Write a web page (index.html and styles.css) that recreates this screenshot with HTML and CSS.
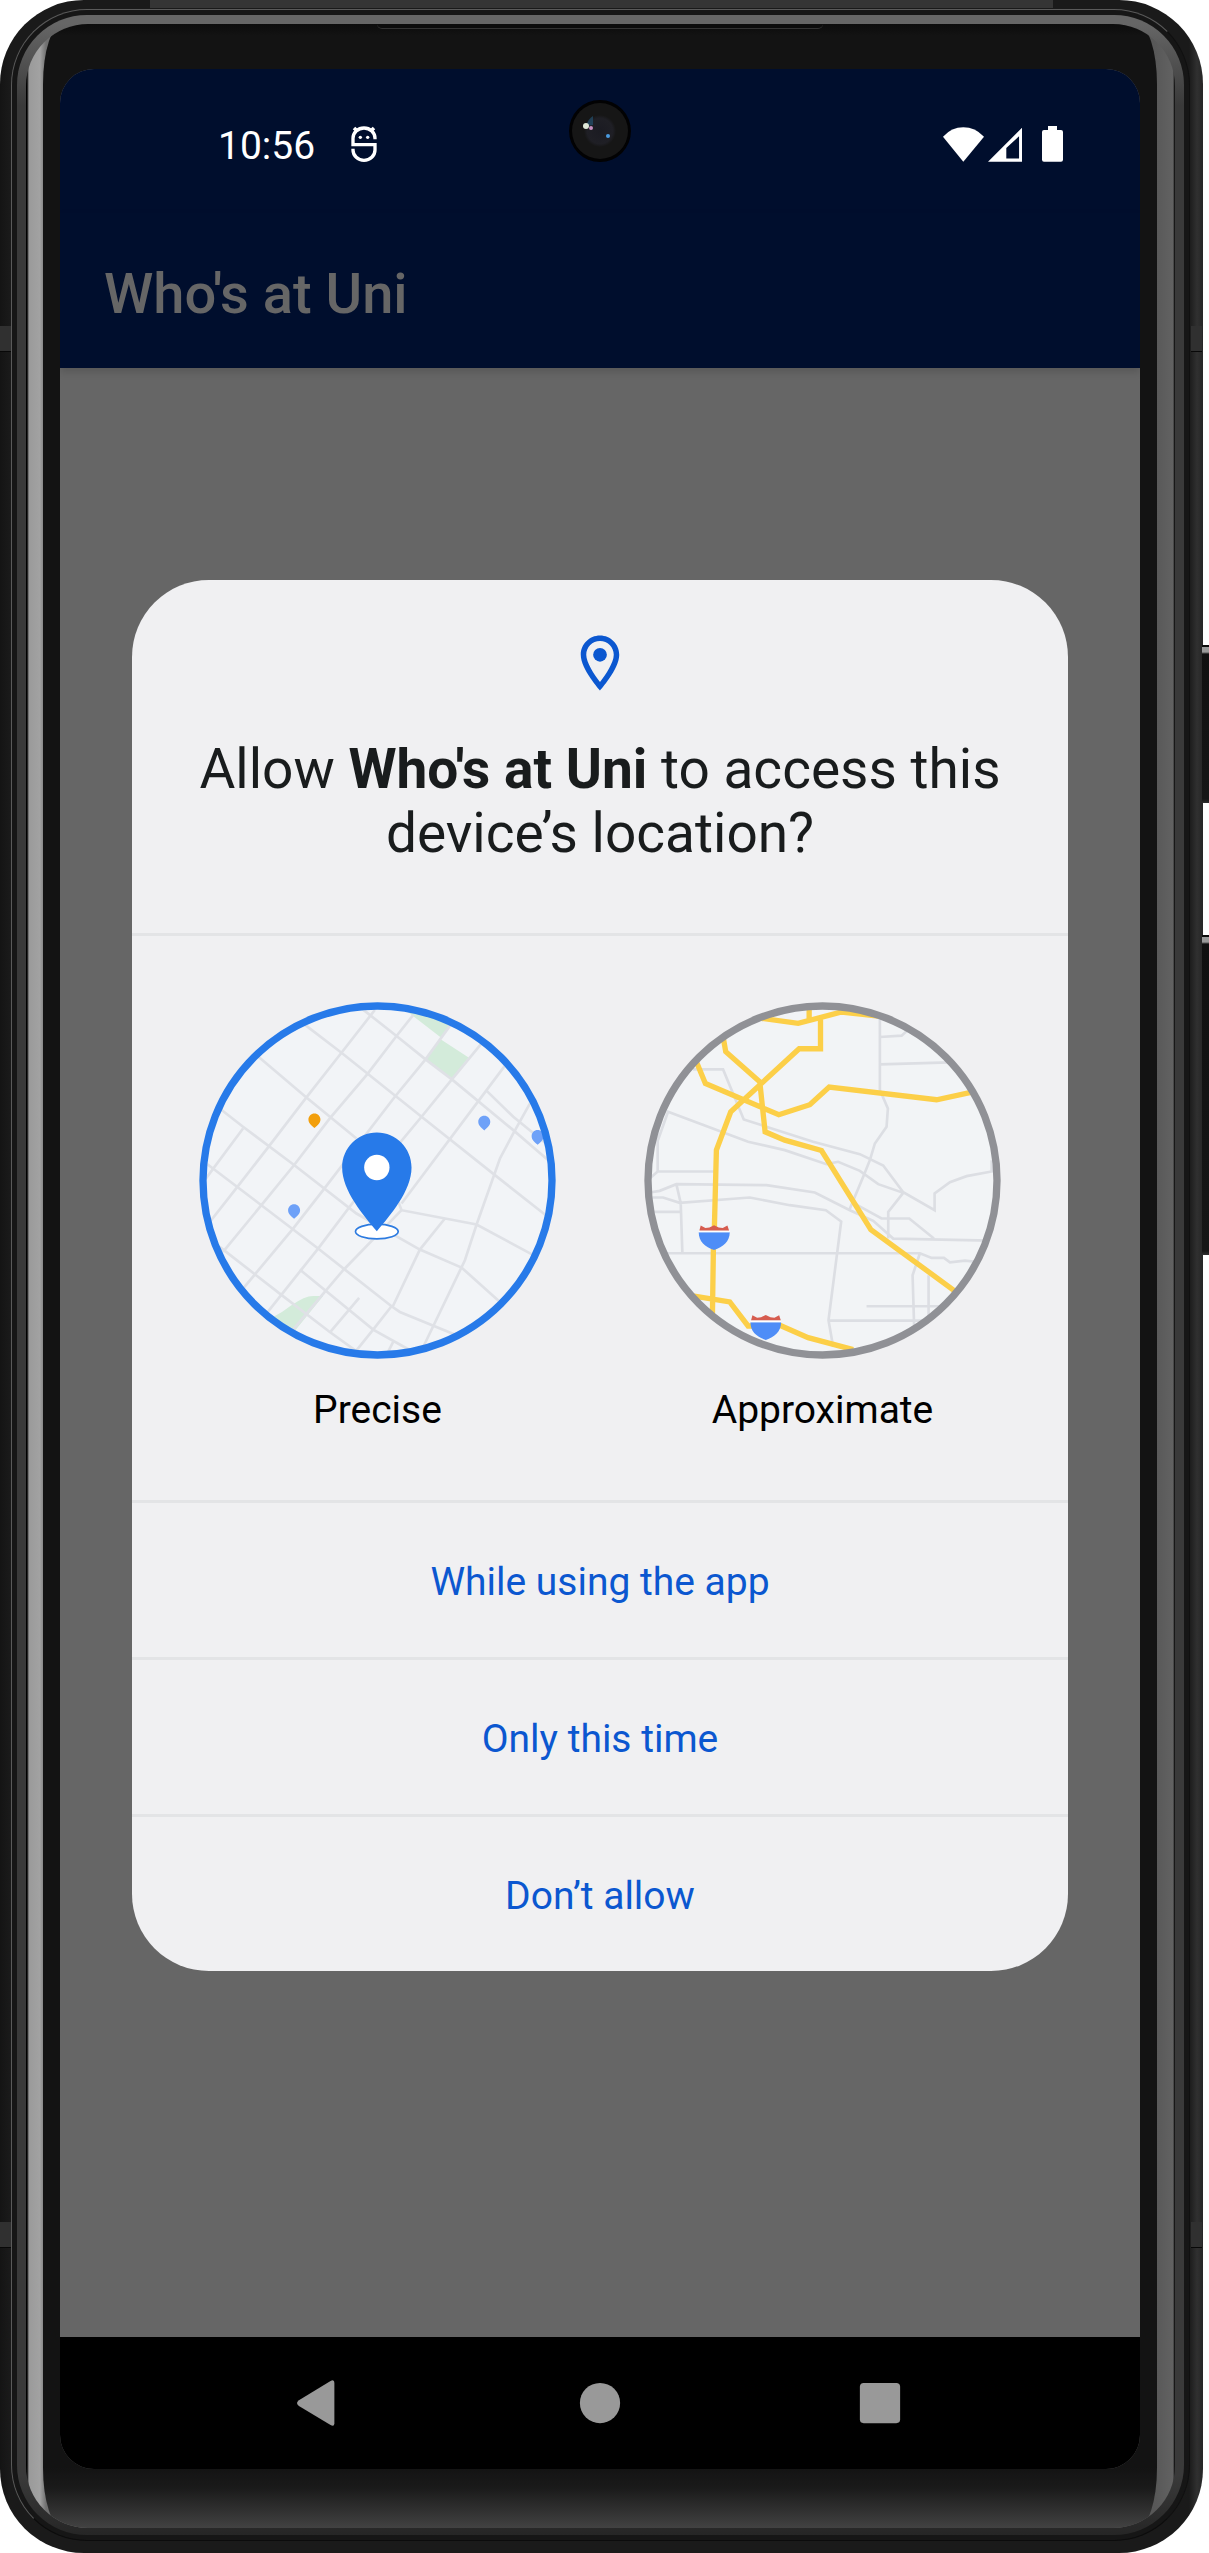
FILE: index.html
```html
<!DOCTYPE html>
<html lang="en">
<head>
<meta charset="utf-8">
<meta name="viewport" content="width=device-width, initial-scale=1">
<title>Who's at Uni</title>
<link rel="stylesheet" href="styles.css">
</head>
<body>
<div class="phone">
  <span class="band band-left-top"></span>
  <span class="band band-right-top"></span>
  <span class="band band-left-bottom"></span>
  <span class="band band-right-bottom"></span>
  <span class="top-plate"></span>
  <span class="side-key power-key"></span>
  <span class="side-key volume-key"></span>
  <div class="rail">
    <div class="chamfer">
      <div class="glass">
        <div class="bezel">
          <span class="speaker"></span>
          <div class="screen">
            <header class="status-bar">
              <div class="status-group">
                <span class="clock">10:56</span>
                <svg class="debug-icon" viewBox="0 0 78 108" fill="none" stroke="#fff" stroke-width="10">
                  <path d="M72 40v-3a33 31 0 0 0-66 0v19h66v16a33 31 0 0 1-66 0v-4"/>
                  <path d="M20 16 9 6M58 16 69 6" stroke-width="11"/>
                  <circle cx="28" cy="34" r="5" fill="#fff" stroke="none"/>
                  <circle cx="50" cy="34" r="5" fill="#fff" stroke="none"/>
                </svg>
              </div>
              <div class="status-group">
                <svg class="wifi-icon" viewBox="0 0 123 108" fill="#fff"><path d="M0 32Q26 4 61 4t62 28L61 107z"/></svg>
                <svg class="signal-icon" viewBox="0 0 104 108" fill="#fff"><path fill-rule="evenodd" d="M104 4v104H0zM95 30 56 66v32h39z"/></svg>
                <svg class="battery-icon" viewBox="0 0 63 108" fill="#fff"><path d="M18 0h27v12h12q6 0 6 6v83q0 6-6 6H6q-6 0-6-6V18q0-6 6-6h12z"/></svg>
              </div>
            </header>
            <svg class="camera" viewBox="0 0 62 62">
              <defs><radialGradient id="lens"><stop offset="0" stop-color="#1b1b22"/><stop offset=".8" stop-color="#1f1f25"/><stop offset="1" stop-color="#161616"/></radialGradient></defs>
              <circle cx="31" cy="31" r="31" fill="#020203"/>
              <circle cx="31" cy="31" r="28" fill="#161616"/>
              <circle cx="31" cy="31" r="16" fill="url(#lens)"/>
              <path d="M17 26q2-7 7-10v9z" fill="#24506e" opacity=".7"/>
              <circle cx="17" cy="26" r="3" fill="#dfe8d8"/>
              <circle cx="22" cy="28" r="2" fill="#c78fc0"/>
              <circle cx="39" cy="36" r="2" fill="#4a9be0"/>
            </svg>
            <div class="app">
              <div class="app-bar"><h1 class="app-title">Who's at Uni</h1></div>
              <div class="overlay">
                <section class="dialog" role="dialog" aria-labelledby="ask">
                  <div class="dialog-head">
                    <svg class="place-icon" viewBox="0 0 24 24" fill="#0b57d0"><path d="M12 2C8.130 2 5 5.130 5 9c0 5.250 7 13 7 13s7-7.750 7-13c0-3.870-3.130-7-7-7zM7 9c0-2.760 2.240-5 5-5s5 2.240 5 5c0 2.880-2.880 7.190-5 9.880C9.920 16.210 7 11.850 7 9z"/><circle cx="12" cy="9" r="2.500"/></svg>
                    <h2 class="question" id="ask">Allow <b>Who's at Uni</b> to access this device’s location?</h2>
                  </div>
                  <div class="accuracy">
                    <label class="choice">
                      <input class="choice-input" type="radio" name="accuracy" checked>
                      <svg class="map" viewBox="58 66 1070 1070">
                        <defs><clipPath id="precise-clip"><circle cx="593" cy="601" r="520"/></clipPath></defs>
                        <g clip-path="url(#precise-clip)">
                          <path fill="#f2f4f7" d="M58 66h1070v1070H58z"/>
                          <path fill="#d3ebda" d="M670 85 782 172 830 110 780 60zM782 178 866 232 816 298 737 238zM280 1010q30-15 55-35 40-28 65-28h30l-85 105z"/>
                          <g fill="none" stroke="#dfe1e6" stroke-width="8">
                            <path d="M545 85 650 168 737 238 816 298 1000 450 1110 545M370 130 485 218 725 410 945 585 1110 715M230 225 380 352 530 475M120 385 190 440 345 556 530 700 720 808 845 862 965 970M80 550 245 675 415 805 635 978 660 995 830 1065M120 800 300 940 450 1055 540 1120M360 868 580 1048 700 1115"/>
                            <path d="M585 90 485 218 380 352 268 498 173 620 75 745M190 445 75 600M700 105 650 168 562 283 450 415 342 556 245 675 130 815M830 110 737 238 645 350 430 630 340 745 190 925M905 190 816 298 725 410 600 560 415 805 260 1000M980 250 920 330 665 670M665 690 490 870 435 935 330 1060M580 1048 530 1110M635 978 580 1048"/>
                            <path d="M918 330 1000 410 1110 500M1050 370 1000 460 960 535 890 733 855 840 730 1100M650 650 665 690 890 733 1070 830M795 715 720 808 638 980M538 953 453 1053M640 1085 622 1120"/>
                          </g>
                          <path fill="#f29f0c" d="M404 400c-10 0-18 8-18 18 0 11 8 17 18 26 10-9 18-15 18-26 0-10-8-18-18-18z"/>
                          <path fill="#6ea1f8" d="M343 672c-10 0-18 8-18 18 0 11 8 17 18 26 10-9 18-15 18-26 0-10-8-18-18-18zM913 407c-10 0-18 8-18 18 0 11 8 17 18 26 10-9 18-15 18-26 0-10-8-18-18-18zM1073 450c-10 0-18 8-18 18 0 11 8 17 18 26 10-9 18-15 18-26 0-10-8-18-18-18z"/>
                          <ellipse cx="591" cy="754" rx="64" ry="22" fill="#fff" stroke="#2d7be0" stroke-width="5"/>
                          <path fill="#277ae9" d="M591 457c-58 0-104 47-104 105 0 70 65 145 104 191 39-46 104-121 104-191 0-58-46-105-104-105z"/>
                          <circle cx="591" cy="562" r="38" fill="#fff"/>
                        </g>
                        <circle cx="593" cy="601" r="523" fill="none" stroke="#277ae9" stroke-width="22"/>
                      </svg>
                      <span class="choice-name">Precise</span>
                    </label>
                    <label class="choice">
                      <input class="choice-input" type="radio" name="accuracy">
                      <svg class="map" viewBox="43 66 1070 1070">
                        <defs><clipPath id="approx-clip"><circle cx="578" cy="601" r="520"/></clipPath></defs>
                        <g clip-path="url(#approx-clip)">
                          <path fill="#f2f4f6" d="M43 66h1070v1070H43z"/>
                          <g fill="none" stroke="#dcdee3" stroke-width="8">
                            <path d="M750 90V330L774 385 770 440 735 490 720 540 700 590 658 690M750 171 815 167 840 145M750 253 960 247"/>
                            <path d="M190 268H280L342 418 550 485 690 522 760 556 820 636 914 690V640L960 606 1010 588 1085 574V540M85 480 115 395 355 485 465 510 590 552 625 545 690 572 745 612 820 638 775 695V775M84 430V574M60 595 84 574H255"/>
                            <path d="M60 637 90 632 140 612 410 615 555 637 660 690 730 722 790 775 1080 781M60 652H100L150 668 360 652 480 675 588 690 634 724 596 1020 610 1100M60 695H153M140 612 153 668 158 818M100 819H870L905 833H942L960 846 1005 841 1050 846M670 668 755 715H838L912 775M870 819 848 885 853 1050M896 885V1020M710 978H960M596 1021H900"/>
                          </g>
                          <g fill="none" stroke="#fccf48" stroke-width="16">
                            <path d="M395 115 505 130 635 96 745 108M538 80V118M572 112V206H508L303 395 260 510 254 740M251 805 248 1010M280 170 288 215 390 305 406 455 465 480 575 511 723 748 985 940M200 245 227 310 447 404 540 374 598 321 920 359 1040 333M180 945 300 965 355 1037H375M450 1035 535 1072 670 1108"/>
                          </g>
                          <path fill="#4e8df7" d="M207 756h93c0 28-20 44-47 53-27-9-46-25-46-53zM362 1026h92c0 28-20 44-46 53-27-9-46-25-46-53z"/>
                          <path fill="#fff" d="M207 751h93v5h-93zM362 1021h92v5h-92z"/>
                          <path fill="#d65c4f" d="m213 736 14 7 12-1 14-7 14 7 12 1 14-7 5 15h-89zM368 1005l14 7 12-1 14-7 14 7 12 1 14-7 5 15h-89z"/>
                        </g>
                        <circle cx="578" cy="601" r="523" fill="none" stroke="#909196" stroke-width="22"/>
                      </svg>
                      <span class="choice-name">Approximate</span>
                    </label>
                  </div>
                  <button class="action" type="button">While using the app</button>
                  <button class="action" type="button">Only this time</button>
                  <button class="action" type="button">Don’t allow</button>
                </section>
              </div>
            </div>
            <nav class="nav-bar">
              <button class="nav-key" type="button" aria-label="Back"><svg class="nav-icon" viewBox="0 0 48 48" fill="#999"><path d="M35 1q4-2 4 2v42q0 4-4 2L2 27q-4-3 0-6z"/></svg></button>
              <button class="nav-key" type="button" aria-label="Home"><svg class="nav-icon" viewBox="0 0 48 48" fill="#999"><circle cx="24" cy="24" r="21"/></svg></button>
              <button class="nav-key" type="button" aria-label="Overview"><svg class="nav-icon" viewBox="0 0 48 48" fill="#999"><rect x="3" y="3" width="42" height="42" rx="4"/></svg></button>
            </nav>
          </div>
        </div>
      </div>
    </div>
  </div>
</div>
</body>
</html>
```
FILE: styles.css
```css
* { box-sizing: border-box; }

body {
  margin: 0;
  background: #fff;
  font-family: Roboto, "Liberation Sans", sans-serif;
}

button {
  border: 0;
  padding: 0;
  background: none;
  font: inherit;
  cursor: pointer;
}

/* Handset shell, from the outer edge inwards */
.phone {
  position: relative;
  display: flex;
  min-height: 100vh;
  margin-right: 6px;
  padding: 9px 13px 12px 11px;
  border-radius: 84px;
  background: linear-gradient(90deg, #141414, #1a1a1a 10px, #1a1a1a calc(100% - 14px), #303030 calc(100% - 6px), #262626);
}

.rail {
  flex: 1;
  display: flex;
  padding: 5px;
  border: 1px solid #5a5a5a;
  border-right-color: #101010;
  border-bottom-color: #0c0c0c;
  border-radius: 76px;
  background: #161616;
}

.chamfer {
  flex: 1;
  display: flex;
  padding: 9px;
  padding-bottom: 7px;
  border-radius: 70px;
  background: linear-gradient(180deg, #666 0, #666 9px, #3a3a3a 90px, #3a3a3a calc(100% - 60px), #262626);
}

.glass {
  flex: 1;
  display: flex;
  padding: 0 18px 0 17px;
  overflow: hidden;
  border-radius: 62px;
  background: linear-gradient(90deg, #000 1px, #9a9a9a 3px, #a2a2a2 14px, #707070 20px, #585858 calc(100% - 20px), #626262 calc(100% - 2px), #000);
}

.bezel {
  position: relative;
  flex: 1;
  display: flex;
  padding: 45px 17px 59px;
  border-radius: 20px / 60px;
  background: linear-gradient(180deg, #0c0c0c, #131313 12px, #131313 calc(100% - 60px), #1a1a1a calc(100% - 40px), #424242);
}

.speaker {
  position: absolute;
  top: 0;
  left: 30%;
  right: 30%;
  height: 5px;
  border-bottom: 1px solid #333;
  border-radius: 0 0 8px 8px;
  background: #0c0c0c;
}

.band {
  position: absolute;
  width: 11px;
  height: 26px;
  background: #303030;
  border-bottom: 1px solid #080808;
}

.band-left-top { top: 326px; left: 0; }
.band-right-top { top: 326px; right: 1px; }
.band-left-bottom { bottom: 305px; left: 0; }
.band-right-bottom { bottom: 305px; right: 1px; }

.top-plate {
  position: absolute;
  top: 0;
  left: 150px;
  right: 150px;
  height: 8px;
  background: #353535;
}

.side-key {
  position: absolute;
  right: -6px;
  width: 7px;
  border-top: 2px solid #0c0c0c;
  background: linear-gradient(180deg, #9a9a9a 5px, #101010 7px, #161616 calc(100% - 4px), #303030);
}

.power-key { top: 645px; height: 158px; }
.volume-key { top: 935px; height: 320px; }

/* Display */
.screen {
  position: relative;
  flex: 1;
  display: flex;
  flex-direction: column;
  overflow: hidden;
  border-radius: 34px;
  background: #666;
}

.status-bar {
  display: flex;
  align-items: center;
  justify-content: space-between;
  height: 144px;
  padding: 6px 77px 0 158px;
  background: #000e2d;
}

.status-group {
  display: flex;
  align-items: center;
}

.clock {
  padding-top: 4px;
  color: #fff;
  font-size: 39px;
  line-height: 46px;
}

.debug-icon { width: 26px; height: 36px; margin-left: 36px; }
.wifi-icon { width: 41px; height: 36px; }
.signal-icon { width: 34px; height: 36px; margin-left: 4px; }
.battery-icon { width: 21px; height: 36px; margin-left: 20px; }

.camera {
  position: absolute;
  top: 31px;
  left: calc(50% - 31px);
  width: 62px;
  height: 62px;
}

.app {
  position: relative;
  flex: 1;
}

.app-bar {
  display: flex;
  align-items: center;
  height: 155px;
  padding: 6px 44px 0;
  background: #000e2d;
  box-shadow: 0 4px 8px rgba(0, 0, 0, 0.15);
}

.app-title {
  margin: 0;
  color: #666;
  font-size: 56px;
  font-weight: 500;
  line-height: 64px;
}

.overlay {
  position: absolute;
  inset: 0;
  display: flex;
  align-items: center;
  justify-content: center;
  padding: 0 72px;
}

.dialog {
  flex: 1;
  overflow: hidden;
  border-radius: 77px;
  background: #f0f0f2;
}

.dialog-head {
  display: flex;
  flex-direction: column;
  align-items: center;
  gap: 41px;
  padding: 50px 60px 68px;
}

.place-icon { width: 66px; height: 66px; }

.question {
  margin: 0;
  color: #191c1d;
  font-size: 55px;
  font-weight: 400;
  line-height: 64px;
  text-align: center;
}

.accuracy {
  display: flex;
  justify-content: space-between;
  padding: 66px 67px;
  border-top: 3px solid #e3e4e6;
}

.choice {
  position: relative;
  display: flex;
  flex-direction: column;
  align-items: center;
  gap: 27px;
}

.choice-input {
  position: absolute;
  inset: 0;
  margin: 0;
  opacity: 0;
}

.map { width: 357px; height: 357px; }

.choice-name {
  color: #000;
  font-size: 39px;
  line-height: 48px;
}

.action {
  display: block;
  width: 100%;
  height: 157px;
  padding-top: 4px;
  border-top: 3px solid #e3e4e6;
  color: #0b57d0;
  font-size: 39px;
  line-height: 48px;
}

.nav-bar {
  display: grid;
  grid-template-columns: repeat(3, 1fr);
  height: 132px;
  padding: 0 120px;
  background: #000;
}

.nav-key {
  display: flex;
  align-items: center;
  justify-content: center;
}

.nav-icon { width: 46px; height: 46px; }
```
